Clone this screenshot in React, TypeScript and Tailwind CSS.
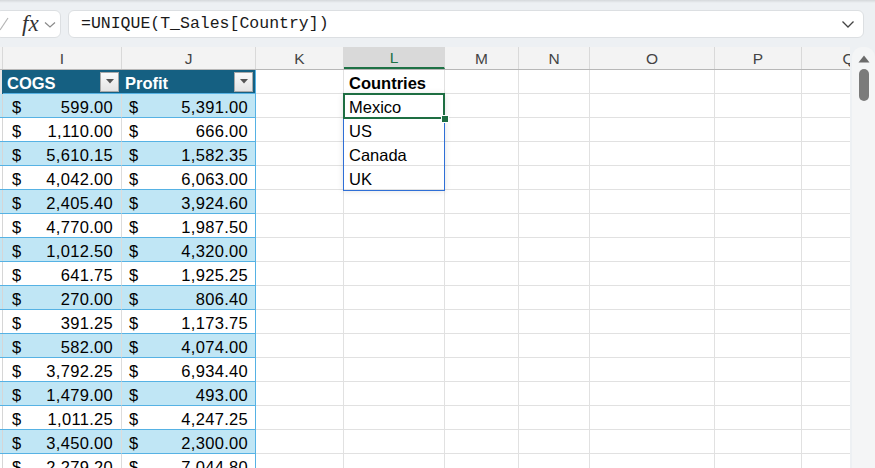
import React from "react";

const colDefs = [
  { key: "H", w: "w-[3px]" },
  { key: "I", w: "w-[119px]" },
  { key: "J", w: "w-[134px]" },
  { key: "K", w: "w-[88px]" },
  { key: "L", w: "w-[101px]" },
  { key: "M", w: "w-[74px]" },
  { key: "N", w: "w-[71px]" },
  { key: "O", w: "w-[125px]" },
  { key: "P", w: "w-[87px]" },
  { key: "Q", w: "w-[94px]" },
];

const data: [string, string][] = [
  ["599.00", "5,391.00"],
  ["1,110.00", "666.00"],
  ["5,610.15", "1,582.35"],
  ["4,042.00", "6,063.00"],
  ["2,405.40", "3,924.60"],
  ["4,770.00", "1,987.50"],
  ["1,012.50", "4,320.00"],
  ["641.75", "1,925.25"],
  ["270.00", "806.40"],
  ["391.25", "1,173.75"],
  ["582.00", "4,074.00"],
  ["3,792.25", "6,934.40"],
  ["1,479.00", "493.00"],
  ["1,011.25", "4,247.25"],
  ["3,450.00", "2,300.00"],
  ["2,279.20", "7,044.80"],
];

const countries = ["Mexico", "US", "Canada", "UK"];

function FilterBtn() {
  return (
    <div className="w-[19px] h-[20px] bg-gradient-to-b from-[#fafafa] to-[#e4e4e4] border border-[#a9a9a9] flex items-center justify-center shrink-0">
      <svg width="8" height="5" viewBox="0 0 8 5">
        <path d="M0 0 L8 0 L4 4.5 Z" fill="#555" />
      </svg>
    </div>
  );
}

function GridCell({ w, children, bold }: { w: string; children?: React.ReactNode; bold?: boolean }) {
  return (
    <div
      className={`${w} h-[24px] shrink-0 border-r border-b border-[#e1e1e1] bg-white flex items-center pl-[5px] pt-[3px] text-[16.5px] text-black overflow-hidden whitespace-nowrap ${bold ? "font-bold" : ""}`}
    >
      {children}
    </div>
  );
}

export default function App() {
  return (
    <div
      className="w-[875px] h-[468px] overflow-hidden bg-[#edf0f3] relative"
      style={{ fontFamily: '"Liberation Sans", Arial, sans-serif' }}
    >
      {/* top shadow */}
      <div className="h-[3px] bg-gradient-to-b from-[#d5d8db] to-[#edf0f3]" />
      {/* formula bar */}
      <div className="h-[44px] flex items-start pt-[7px]">
        <div className="w-[66px] -ml-[5px] h-[28px] bg-white rounded-[6px] border border-[#dcdfe2] flex items-center shrink-0">
          <svg width="12" height="16" viewBox="0 0 12 16" className="ml-[1px]">
            <path d="M3 14 L11 2" stroke="#b5b5b5" strokeWidth="1.2" fill="none" />
          </svg>
          <span
            className="ml-[13px] text-[23px] italic text-[#333] leading-none -mt-[2px]"
            style={{ fontFamily: '"Liberation Serif", "Times New Roman", serif' }}
          >
            fx
          </span>
          <svg width="12" height="8" viewBox="0 0 12 8" className="ml-[5px] mt-[2px]">
            <path d="M1 1.5 L6 6 L11 1.5" stroke="#8a8a8a" strokeWidth="1.2" fill="none" />
          </svg>
        </div>
        <div className="ml-[7px] w-[796px] h-[28px] bg-white rounded-[6px] border border-[#dcdfe2] flex items-center justify-between pl-[12px] pr-[8px] shrink-0">
          <span
            className="text-[16.5px] text-[#1a1a1a]"
            style={{ fontFamily: '"Liberation Mono", "Courier New", monospace' }}
          >
            =UNIQUE(T_Sales[Country])
          </span>
          <svg width="14" height="9" viewBox="0 0 14 9">
            <path d="M1.5 1.5 L7 7 L12.5 1.5" stroke="#444" strokeWidth="1.3" fill="none" />
          </svg>
        </div>
      </div>

      {/* sheet + scrollbar */}
      <div className="flex">
        <div className="w-[850px] shrink-0 relative bg-white overflow-hidden">
          <div className="w-[900px]">
            {/* column headers */}
            <div className="flex h-[23px] bg-[#f3f3f3] border-b border-[#b7b7b7]">
              {colDefs.map((c) => (
                <div
                  key={c.key}
                  className={`${c.w} shrink-0 h-full flex items-center justify-center pt-[1px] text-[15.5px] border-r border-[#d9d9d9] overflow-hidden ${
                    c.key === "L"
                      ? "bg-[#d9d9d9] text-[#1e7145] border-b-2 border-b-[#1e7145]"
                      : "text-[#444]"
                  }`}
                >
                  {c.key === "H" ? "" : c.key}
                </div>
              ))}
            </div>

            {/* table header row */}
            <div className="flex">
              <div className="w-[3px] h-[24px] shrink-0 bg-[#156082] flex">
                <div className="w-[2px] h-full bg-[#e6e6e6]" />
              </div>
              <div className="w-[119px] h-[24px] shrink-0 bg-[#156082] border-b border-[#56b2e4] flex items-center justify-between pl-[4px] pr-[3px]">
                <span className="text-white font-bold text-[16.5px] pt-[3px]">COGS</span>
                <FilterBtn />
              </div>
              <div className="w-[134px] h-[24px] shrink-0 bg-[#156082] border-b border-r border-[#56b2e4] flex items-center justify-between pl-[3px] pr-[2px]">
                <span className="text-white font-bold text-[16.5px] pt-[3px]">Profit</span>
                <FilterBtn />
              </div>
              <GridCell w="w-[88px]" />
              <GridCell w="w-[101px]" bold>
                Countries
              </GridCell>
              <GridCell w="w-[74px]" />
              <GridCell w="w-[71px]" />
              <GridCell w="w-[125px]" />
              <GridCell w="w-[87px]" />
              <GridCell w="w-[94px]" />
            </div>

            {/* data rows */}
            {data.map(([cogs, profit], i) => {
              const band = i % 2 === 0 ? "bg-[#c0e6f5]" : "bg-white";
              return (
                <div key={i} className="flex">
                  <div className={`w-[3px] h-[24px] shrink-0 ${band} border-b border-[#56b2e4] flex`}>
                    <div className="ml-[2px] w-[1px] h-full bg-[#d6d6d6]" />
                  </div>
                  <div
                    className={`w-[119px] h-[24px] shrink-0 ${band} border-b border-r border-b-[#56b2e4] border-r-[#dcdcdc] flex items-center justify-between pl-[9px] pr-[8px] pt-[3px] text-[16.5px] tracking-[0.3px] text-black`}
                  >
                    <span>$</span>
                    <span>{cogs}</span>
                  </div>
                  <div
                    className={`w-[134px] h-[24px] shrink-0 ${band} border-b border-r border-[#56b2e4] flex items-center justify-between pl-[7px] pr-[7px] pt-[3px] text-[16.5px] tracking-[0.3px] text-black`}
                  >
                    <span>$</span>
                    <span>{profit}</span>
                  </div>
                  <GridCell w="w-[88px]" />
                  <GridCell w="w-[101px]">{countries[i] ?? ""}</GridCell>
                  <GridCell w="w-[74px]" />
                  <GridCell w="w-[71px]" />
                  <GridCell w="w-[125px]" />
                  <GridCell w="w-[87px]" />
                  <GridCell w="w-[94px]" />
                </div>
              );
            })}
          </div>

          {/* spill range outline */}
          <div className="absolute left-[343px] top-[47px] w-[102px] h-[97px] border border-[#2f6fd6] pointer-events-none shadow-[0_0_6px_rgba(0,0,0,0.12)]" />
          {/* active cell */}
          <div className="absolute left-[343px] top-[46px] w-[102px] h-[26px] border-2 border-[#1e6e42] pointer-events-none" />
          <div className="absolute left-[441px] top-[68px] w-[6px] h-[6px] bg-[#1e6e42] border border-white box-content pointer-events-none" />
        </div>

        {/* vertical scrollbar */}
        <div className="w-[25px] shrink-0 pl-[2px]">
          <div className="h-[425px] bg-[#f4f5f6] rounded-t-[10px] flex flex-col items-center pt-[8px]">
            <svg width="12" height="8" viewBox="0 0 12 8">
              <path d="M6 0.5 L11.5 7.5 L0.5 7.5 Z" fill="#6b6b6b" />
            </svg>
            <div className="mt-[6px] w-[10px] h-[32px] rounded-full bg-[#7b7b7b]" />
          </div>
        </div>
      </div>
    </div>
  );
}
